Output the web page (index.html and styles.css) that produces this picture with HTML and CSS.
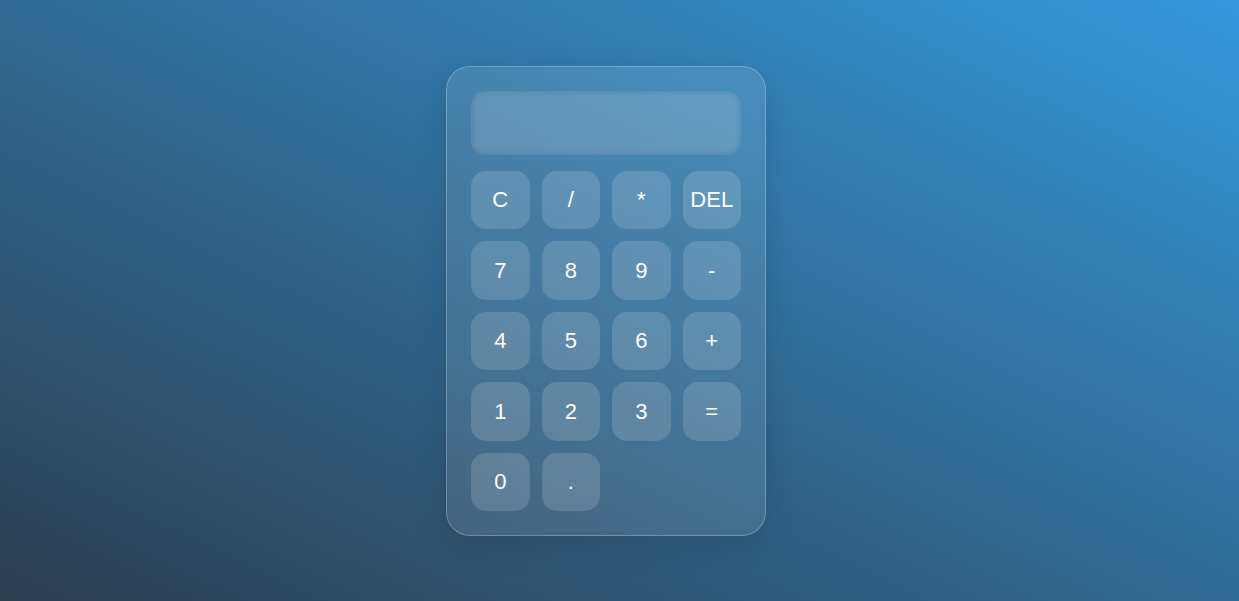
FILE: index.html
```html
<!DOCTYPE html>
<html lang="en">
<head>
<meta charset="utf-8">
<title>Calculator</title>
<link rel="stylesheet" href="styles.css">
</head>
<body>
<div class="calculator">
  <div class="display"></div>
  <div class="keys">
    <button class="key">C</button>
    <button class="key">/</button>
    <button class="key">*</button>
    <button class="key">DEL</button>
    <button class="key">7</button>
    <button class="key">8</button>
    <button class="key">9</button>
    <button class="key">-</button>
    <button class="key">4</button>
    <button class="key">5</button>
    <button class="key">6</button>
    <button class="key">+</button>
    <button class="key">1</button>
    <button class="key">2</button>
    <button class="key">3</button>
    <button class="key">=</button>
    <button class="key">0</button>
    <button class="key">.</button>
  </div>
</div>
</body>
</html>
```

FILE: styles.css
```css
* { box-sizing: border-box; }
html, body { height: 100%; }
body {
  margin: 0;
  font-family: "Liberation Sans", Arial, sans-serif;
  background: linear-gradient(to top right, #2c3e50, #3498db);
  display: flex;
  align-items: center;
  justify-content: center;
  padding-right: 27px;
  padding-top: 1px;
}
.calculator {
  width: 320px;
  padding: 24px;
  border-radius: 24px;
  background: rgba(255, 255, 255, 0.1);
  border: 1px solid rgba(255, 255, 255, 0.25);
  box-shadow: 0 8px 32px rgba(0, 0, 0, 0.12);
}
.display {
  height: 64px;
  margin-bottom: 16px;
  border-radius: 14px;
  background: rgba(255, 255, 255, 0.15);
  box-shadow: inset 0 0 6px rgba(0, 0, 0, 0.15);
}
.keys {
  display: grid;
  grid-template-columns: repeat(4, 1fr);
  gap: 12px;
}
.key {
  aspect-ratio: 1 / 1;
  border: none;
  border-radius: 15px;
  background: rgba(255, 255, 255, 0.15);
  color: #fff;
  font-family: "Liberation Sans", Arial, sans-serif;
  font-size: 22px;
  padding: 0;
  cursor: pointer;
}
```
